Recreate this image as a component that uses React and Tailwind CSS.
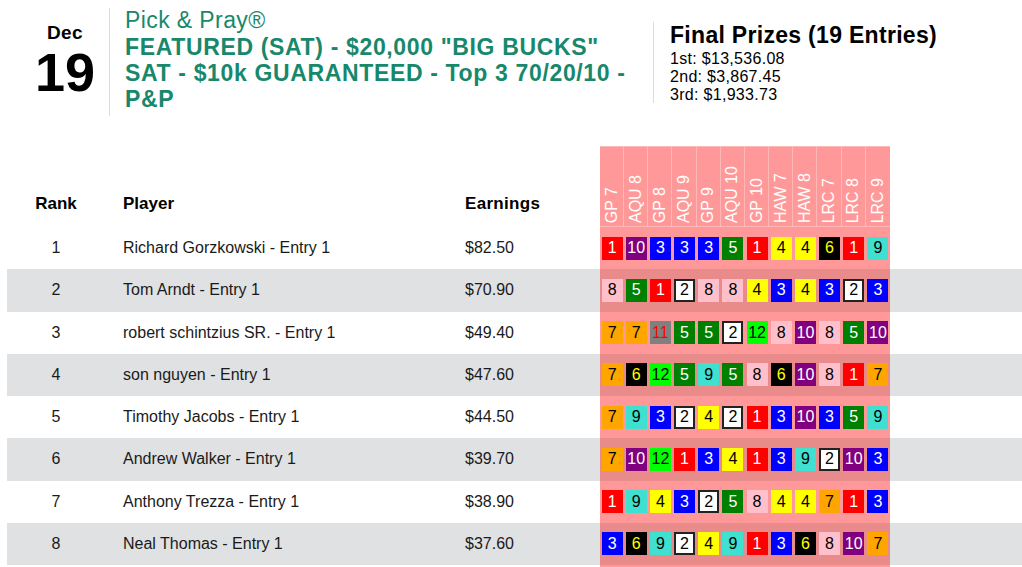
import React from "react";

const COLORS = {
  1: "bg-[#ff0000] text-white",
  2: "bg-white text-black border-2 border-[#222222]",
  3: "bg-[#0000ff] text-white",
  4: "bg-[#ffff00] text-black",
  5: "bg-[#008000] text-white",
  6: "bg-black text-[#ffff00]",
  7: "bg-[#ffa500] text-black",
  8: "bg-[#ffc0cb] text-black",
  9: "bg-[#40e0d0] text-black",
  10: "bg-[#800080] text-white",
  11: "bg-[#808080] text-[#ff0000]",
  12: "bg-[#00ff00] text-black",
};

const RACES = ["GP 7", "AQU 8", "GP 8", "AQU 9", "GP 9", "AQU 10", "GP 10", "HAW 7", "HAW 8", "LRC 7", "LRC 8", "LRC 9"];

const ROWS = [
  { rank: 1, name: "Richard Gorzkowski - Entry 1", earn: "$82.50", picks: [1, 10, 3, 3, 3, 5, 1, 4, 4, 6, 1, 9] },
  { rank: 2, name: "Tom Arndt - Entry 1", earn: "$70.90", picks: [8, 5, 1, 2, 8, 8, 4, 3, 4, 3, 2, 3] },
  { rank: 3, name: "robert schintzius SR. - Entry 1", earn: "$49.40", picks: [7, 7, 11, 5, 5, 2, 12, 8, 10, 8, 5, 10] },
  { rank: 4, name: "son nguyen - Entry 1", earn: "$47.60", picks: [7, 6, 12, 5, 9, 5, 8, 6, 10, 8, 1, 7] },
  { rank: 5, name: "Timothy Jacobs - Entry 1", earn: "$44.50", picks: [7, 9, 3, 2, 4, 2, 1, 3, 10, 3, 5, 9] },
  { rank: 6, name: "Andrew Walker - Entry 1", earn: "$39.70", picks: [7, 10, 12, 1, 3, 4, 1, 3, 9, 2, 10, 3] },
  { rank: 7, name: "Anthony Trezza - Entry 1", earn: "$38.90", picks: [1, 9, 4, 3, 2, 5, 8, 4, 4, 7, 1, 3] },
  { rank: 8, name: "Neal Thomas - Entry 1", earn: "$37.60", picks: [3, 6, 9, 2, 4, 9, 1, 3, 6, 8, 10, 7] },
];

function Cell({ n }) {
  return (
    <div className="flex items-center justify-center">
      <div className={`flex h-[23px] w-[21px] items-center justify-center text-[16px] leading-none ${COLORS[n]}`}>
        {n}
      </div>
    </div>
  );
}

export default function App() {
  return (
    <div className="min-h-[567px] w-[1022px] overflow-hidden bg-white font-['Liberation_Sans',Arial,sans-serif] text-[#1a1a1a]">
      {/* Top header */}
      <div className="flex items-start pt-[8px]">
        <div className="ml-[21px] flex w-[88px] flex-col items-center pt-[15px] font-bold text-black">
          <div className="text-[19px] leading-[20px] tracking-[0.4px]">Dec</div>
          <div className="mt-[2px] text-[54px] leading-[54px]">19</div>
        </div>
        <div className="w-[536px] border-l border-[#dcdcdc] pb-[4px] pl-[15px] text-[#18886c]">
          <div className="text-[23px] leading-[24px] tracking-[0.4px]">Pick &amp; Pray®</div>
          <div className="mt-[2px] text-[23px] font-bold leading-[26px] tracking-[0.65px]">
            FEATURED (SAT) - $20,000 "BIG BUCKS"
            <br />
            SAT - $10k GUARANTEED - Top 3 70/20/10 -
            <br />
            P&amp;P
          </div>
        </div>
        <div className="ml-[8px] mt-[14px] h-[81px] border-l border-[#dcdcdc] pl-[16px] text-black">
          <div className="text-[23px] font-bold leading-[26px] tracking-[0.3px]">Final Prizes (19 Entries)</div>
          <div className="mt-[1.5px] text-[16px] leading-[18px] tracking-[0.3px]">
            <div>1st: $13,536.08</div>
            <div>2nd: $3,867.45</div>
            <div>3rd: $1,933.73</div>
          </div>
        </div>
      </div>

      {/* Table */}
      <div className="ml-[7px] mt-[30px]">
        {/* Header row */}
        <div className="flex h-[81px] items-stretch">
          <div className="flex w-[98px] items-end justify-center pb-[11px] text-[17px] font-bold text-black">Rank</div>
          <div className="flex w-[342px] items-end pb-[11px] pl-[18px] text-[17px] font-bold text-black">Player</div>
          <div className="flex w-[153px] items-end pb-[11px] pl-[18px] text-[17px] font-bold tracking-[0.3px] text-black">Earnings</div>
          <div className="grid w-[290px] grid-cols-12 border-t border-b border-[#ffb8b8] bg-[#ff9999]">
            {RACES.map((r, i) => (
              <div
                key={r}
                className={`flex items-end justify-center pb-[3px] ${i < 11 ? "border-r border-[#ffb8b8]" : ""}`}
              >
                <span className="rotate-180 text-[16px] leading-none whitespace-nowrap text-white [writing-mode:vertical-rl]">
                  {r}
                </span>
              </div>
            ))}
          </div>
          <div className="flex-1" />
        </div>

        {/* Body rows */}
        {ROWS.map((row, idx) => {
          const even = idx % 2 === 1;
          return (
            <div key={row.rank} className={`flex h-[42.25px] items-stretch text-[16px] ${even ? "bg-[#e0e1e3]" : "bg-white"}`}>
              <div className="flex w-[98px] items-center justify-center">{row.rank}</div>
              <div className="flex w-[342px] items-center pl-[18px]">{row.name}</div>
              <div className="flex w-[153px] items-center pl-[18px]">{row.earn}</div>
              <div className={`grid w-[290px] grid-cols-12 ${even ? "bg-[#ea8b8b]" : "bg-[#ff9999]"}`}>
                {row.picks.map((n, i) => (
                  <Cell key={i} n={n} />
                ))}
              </div>
              <div className="flex-1" />
            </div>
          );
        })}
        <div className="flex h-[20px]">
          <div className="w-[593px]" />
          <div className="w-[290px] bg-[#ff9999]" />
        </div>
      </div>
    </div>
  );
}
